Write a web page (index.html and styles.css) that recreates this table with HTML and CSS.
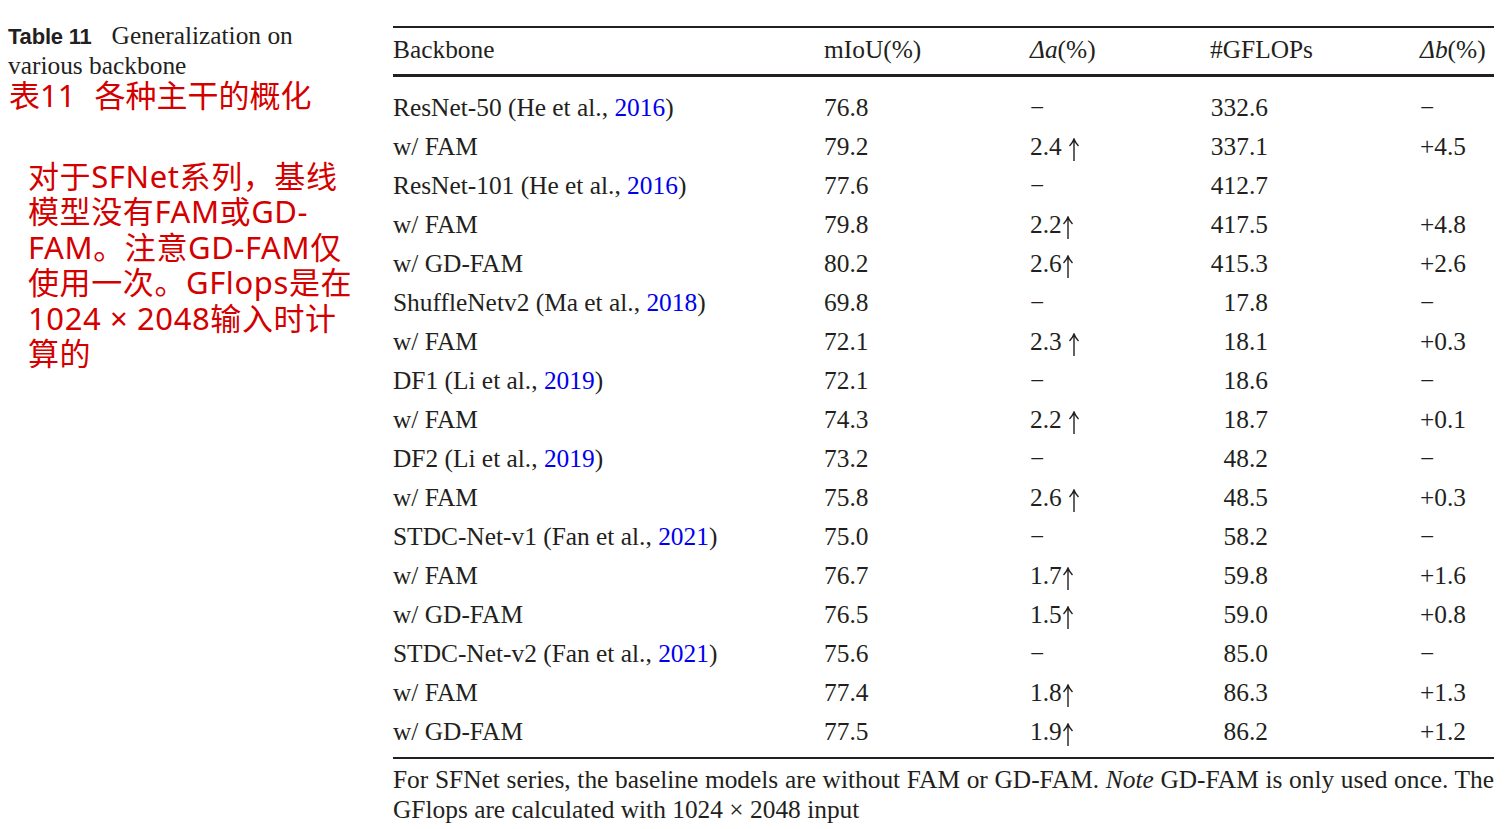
FILE: index.html
```html
<!DOCTYPE html>
<html lang="en">
<head>
<meta charset="utf-8">
<title>Table 11</title>
<link rel="stylesheet" href="styles.css">
</head>
<body>
<div class="page">
  <aside class="side">
    <div class="caption"><span class="cap-label">Table 11</span><span class="cap-title">Generalization on various backbone</span></div>
    <div class="cn-title">表11<span class="cn-gap">各种主干的概化</span></div>
    <p class="cn-note">对于SFNet系列，基线<br>模型没有FAM或GD-<br>FAM。注意GD-FAM仅<br>使用一次。GFlops是在<br>1024 × 2048输入时计<br>算的</p>
  </aside>
  <main class="tablewrap">
    <div class="grid head">
      <div>Backbone</div><div>mIoU(%)</div><div><i>Δa</i>(%)</div><div>#GFLOPs</div><div><i>Δb</i>(%)</div>
    </div>
    <div class="grid body">
      <div>ResNet-50 (He et al., <span class="ref">2016</span>)</div><div>76.8</div><div>−</div><div><span class="num">332.6</span></div><div>−</div>
      <div>w/ FAM</div><div>79.2</div><div>2.4 <svg class="up" viewBox="0 0 12 23"><path d="M6 23V1.5M1.5 8Q4.5 5 6 1Q7.5 5 10.5 8"/></svg></div><div><span class="num">337.1</span></div><div>+4.5</div>
      <div>ResNet-101 (He et al., <span class="ref">2016</span>)</div><div>77.6</div><div>−</div><div><span class="num">412.7</span></div><div></div>
      <div>w/ FAM</div><div>79.8</div><div>2.2<svg class="up" viewBox="0 0 12 23"><path d="M6 23V1.5M1.5 8Q4.5 5 6 1Q7.5 5 10.5 8"/></svg></div><div><span class="num">417.5</span></div><div>+4.8</div>
      <div>w/ GD-FAM</div><div>80.2</div><div>2.6<svg class="up" viewBox="0 0 12 23"><path d="M6 23V1.5M1.5 8Q4.5 5 6 1Q7.5 5 10.5 8"/></svg></div><div><span class="num">415.3</span></div><div>+2.6</div>
      <div>ShuffleNetv2 (Ma et al., <span class="ref">2018</span>)</div><div>69.8</div><div>−</div><div><span class="num">17.8</span></div><div>−</div>
      <div>w/ FAM</div><div>72.1</div><div>2.3 <svg class="up" viewBox="0 0 12 23"><path d="M6 23V1.5M1.5 8Q4.5 5 6 1Q7.5 5 10.5 8"/></svg></div><div><span class="num">18.1</span></div><div>+0.3</div>
      <div>DF1 (Li et al., <span class="ref">2019</span>)</div><div>72.1</div><div>−</div><div><span class="num">18.6</span></div><div>−</div>
      <div>w/ FAM</div><div>74.3</div><div>2.2 <svg class="up" viewBox="0 0 12 23"><path d="M6 23V1.5M1.5 8Q4.5 5 6 1Q7.5 5 10.5 8"/></svg></div><div><span class="num">18.7</span></div><div>+0.1</div>
      <div>DF2 (Li et al., <span class="ref">2019</span>)</div><div>73.2</div><div>−</div><div><span class="num">48.2</span></div><div>−</div>
      <div>w/ FAM</div><div>75.8</div><div>2.6 <svg class="up" viewBox="0 0 12 23"><path d="M6 23V1.5M1.5 8Q4.5 5 6 1Q7.5 5 10.5 8"/></svg></div><div><span class="num">48.5</span></div><div>+0.3</div>
      <div>STDC-Net-v1 (Fan et al., <span class="ref">2021</span>)</div><div>75.0</div><div>−</div><div><span class="num">58.2</span></div><div>−</div>
      <div>w/ FAM</div><div>76.7</div><div>1.7<svg class="up" viewBox="0 0 12 23"><path d="M6 23V1.5M1.5 8Q4.5 5 6 1Q7.5 5 10.5 8"/></svg></div><div><span class="num">59.8</span></div><div>+1.6</div>
      <div>w/ GD-FAM</div><div>76.5</div><div>1.5<svg class="up" viewBox="0 0 12 23"><path d="M6 23V1.5M1.5 8Q4.5 5 6 1Q7.5 5 10.5 8"/></svg></div><div><span class="num">59.0</span></div><div>+0.8</div>
      <div>STDC-Net-v2 (Fan et al., <span class="ref">2021</span>)</div><div>75.6</div><div>−</div><div><span class="num">85.0</span></div><div>−</div>
      <div>w/ FAM</div><div>77.4</div><div>1.8<svg class="up" viewBox="0 0 12 23"><path d="M6 23V1.5M1.5 8Q4.5 5 6 1Q7.5 5 10.5 8"/></svg></div><div><span class="num">86.3</span></div><div>+1.3</div>
      <div>w/ GD-FAM</div><div>77.5</div><div>1.9<svg class="up" viewBox="0 0 12 23"><path d="M6 23V1.5M1.5 8Q4.5 5 6 1Q7.5 5 10.5 8"/></svg></div><div><span class="num">86.2</span></div><div>+1.2</div>
    </div>
    <div class="foot">
      <span class="foot-line1">For SFNet series, the baseline models are without FAM or GD-FAM. <i>Note</i> GD-FAM is only used once. The</span>
      <span class="foot-line2">GFlops are calculated with 1024 × 2048 input</span>
    </div>
  </main>
</div>
</body>
</html>
```

FILE: styles.css
```css
html, body {
  margin: 0;
  padding: 0;
  background: #ffffff;
}
body {
  font-family: "Liberation Serif", "Times New Roman", serif;
  color: #231f20;
  width: 1510px;
  height: 829px;
  overflow: hidden;
}
.page {
  display: flex;
  align-items: flex-start;
}
.side {
  width: 385px;
  flex: 0 0 385px;
  padding-left: 8px;
  padding-top: 20px;
}
.caption {
  font-size: 25.4px;
  line-height: 30px;
  width: 300px;
}
.cap-label {
  font-family: "Liberation Sans", Arial, sans-serif;
  font-weight: bold;
  font-size: 22px;
  line-height: 20px;
  margin-right: 20px;
  letter-spacing: -0.2px;
}
.cn-title {
  font-family: "Noto Sans", "Noto Sans CJK SC", sans-serif;
  color: #d40000;
  font-size: 31px;
  line-height: 34px;
  margin-left: 1px;
  margin-top: -2px;
}
.cn-gap {
  margin-left: 19px;
}
.cn-note {
  font-family: "Noto Sans", "Noto Sans CJK SC", sans-serif;
  color: #d40000;
  font-size: 31px;
  line-height: 35.4px;
  letter-spacing: 0.6px;
  margin: 47px 0 0 20px;
  white-space: nowrap;
}
.tablewrap {
  width: 1101px;
  padding-top: 26px;
}
.grid {
  display: grid;
  grid-template-columns: 431px 206px 180px 210px 74px;
  font-size: 25.4px;
}
.head {
  border-top: 2px solid #231f20;
  border-bottom: 3px solid #231f20;
  align-items: center;
  padding-bottom: 3px;
  box-sizing: border-box;
  height: 51px;
}
.body {
  grid-auto-rows: 39px;
  align-items: center;
  padding-top: 11px;
  padding-bottom: 6px;
  border-bottom: 2px solid #231f20;
  white-space: nowrap;
}
.num {
  display: inline-block;
  width: 58px;
  text-align: right;
}
.ref {
  color: #0000ee;
}
.up {
  width: 12px;
  height: 23px;
  vertical-align: -6px;
  fill: none;
  stroke: #231f20;
  stroke-width: 1.4;
}
.foot {
  width: 1101px;
  font-size: 25.4px;
  line-height: 30px;
  padding-top: 5px;
}
.foot-line1 {
  display: block;
  white-space: nowrap;
  word-spacing: -2px;
  text-align: justify;
  text-align-last: justify;
}
.foot-line2 {
  display: block;
}
```
